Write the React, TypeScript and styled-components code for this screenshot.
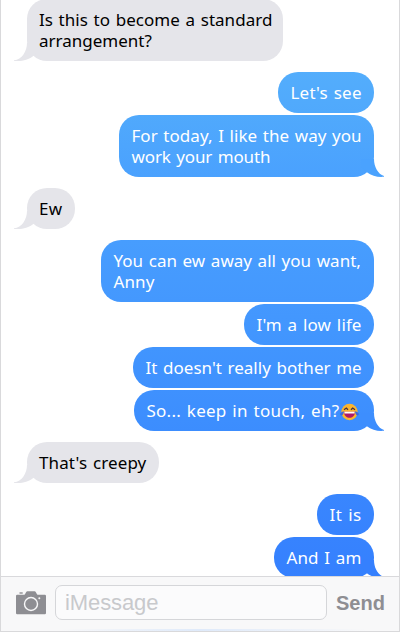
import React from "react";
import styled, { createGlobalStyle } from "styled-components";

const GlobalStyle = createGlobalStyle`
  * { box-sizing: border-box; }
  body { margin: 0; background: #fff; }
`;

type Side = "in" | "out";

const Phone = styled.main`
  display: flex;
  flex-direction: column;
  height: 632px;
  border: 1px solid #d9d9db;
  border-top: 0;
  overflow: hidden;
  font-family: "Noto Sans", "Noto Color Emoji", sans-serif;
`;

const Thread = styled.section`
  display: flex;
  flex-direction: column;
  gap: 11px;
  height: 576px;
  flex: none;
  padding: 0 25px 0 26px;
  overflow: hidden;
`;

const Group = styled.div<{ $side: Side }>`
  display: flex;
  flex-direction: column;
  align-items: ${(p) => (p.$side === "in" ? "flex-start" : "flex-end")};
  gap: 2px;
  &:first-child { margin-top: -1px; }
`;

const Bubble = styled.div<{ $side: Side; $width: number; $shade?: string }>`
  position: relative;
  flex: none;
  width: ${(p) => p.$width}px;
  padding: 10px 0 10px ${(p) => (p.$side === "in" ? 12 : 12.5)}px;
  border-radius: 20px;
  color: ${(p) => (p.$side === "in" ? "#000" : "#fff")};
  background: ${(p) => (p.$side === "in" ? "#e5e5ea" : p.$shade)};
  font-size: 17px;
  line-height: 21px;
  min-height: 41px;
`;

const Line = styled.div<{ $tracking: number }>`
  height: 21px;
  white-space: pre;
  word-spacing: 1.2px;
  letter-spacing: ${(p) => p.$tracking}px;
`;

const TailShape = styled.svg<{ $side: Side }>`
  position: absolute;
  bottom: 0;
  ${(p) => (p.$side === "in" ? "left: -13px;" : "right: -10px; transform: scaleX(-1);")}
`;

const Composer = styled.footer`
  display: flex;
  align-items: flex-start;
  flex: 1;
  padding: 8px 0 0 14px;
  border-top: 1px solid #d9d9dc;
  background:
    linear-gradient(90deg, transparent 15%, #dfeafa 50%, transparent 92%) bottom / 100% 2px no-repeat,
    #f8f8f9;
`;

const CameraIcon = styled.svg`
  flex: none;
  margin-top: 5px;
`;

const Field = styled.div`
  width: 272px;
  height: 35px;
  margin-left: 8px;
  padding-left: 9px;
  border: 1px solid #d5d6d9;
  border-radius: 7px;
  background: #fbfbfc;
  color: #c8c9cc;
  font: 22px/34px "Liberation Sans", Arial, sans-serif;
  letter-spacing: -0.1px;
`;

const Send = styled.div`
  margin-left: 9px;
  color: #8e8e93;
  font: bold 20px/36px "Liberation Sans", Arial, sans-serif;
`;

const Laugh = styled.svg`
  display: inline-block;
  vertical-align: -4px;
  margin-left: 0.5px;
`;

interface TextLine {
  text: string;
  tracking: number;
  laugh?: boolean;
}

interface Message {
  width: number;
  shade?: string;
  lines: TextLine[];
}

const thread: { side: Side; tail: string; messages: Message[] }[] = [
  {
    side: "in",
    tail: "#e5e5ea",
    messages: [
      {
        width: 256,
        lines: [
          { text: "Is this to become a standard", tracking: 0.03 },
          { text: "arrangement?", tracking: 0 },
        ],
      },
    ],
  },
  {
    side: "out",
    tail: "#4aa2fe",
    messages: [
      { width: 96, shade: "linear-gradient(#53adfc, #50a9fc)", lines: [{ text: "Let's see", tracking: 0.2 }] },
      {
        width: 255,
        shade: "linear-gradient(#50a9fc, #4aa1fe)",
        lines: [
          { text: "For today, I like the way you", tracking: 0.03 },
          { text: "work your mouth", tracking: -0.13 },
        ],
      },
    ],
  },
  { side: "in", tail: "#e5e5ea", messages: [{ width: 48, lines: [{ text: "Ew", tracking: 0.2 }] }] },
  {
    side: "out",
    tail: "#3d8efe",
    messages: [
      {
        width: 273,
        shade: "linear-gradient(#479dfe, #4498fe)",
        lines: [
          { text: "You can ew away all you want,", tracking: 0.01 },
          { text: "Anny", tracking: 0.1 },
        ],
      },
      { width: 130, shade: "linear-gradient(#4498fe, #4195fe)", lines: [{ text: "I'm a low life", tracking: 0.13 }] },
      { width: 241, shade: "linear-gradient(#4195fe, #3f91fe)", lines: [{ text: "It doesn't really bother me", tracking: 0.01 }] },
      {
        width: 240,
        shade: "linear-gradient(#3f91fe, #3c8dfe)",
        lines: [{ text: "So... keep in touch, eh?", tracking: 0.24, laugh: true }],
      },
    ],
  },
  {
    side: "in",
    tail: "#e5e5ea",
    messages: [{ width: 132, lines: [{ text: "That's creepy", tracking: 0.12 }] }],
  },
  {
    side: "out",
    tail: "#3580fe",
    messages: [
      { width: 57, shade: "linear-gradient(#3986fe, #3783fe)", lines: [{ text: "It is", tracking: 0.4 }] },
      { width: 100, shade: "linear-gradient(#3783fe, #3580fe)", lines: [{ text: "And I am", tracking: 0.08 }] },
    ],
  },
];

function Tail({ side, fill }: { side: Side; fill: string }) {
  const d =
    side === "in"
      ? "M13 0C13 8 8 16.800 0 17.200V18C8 18.200 14 17.300 19.300 13L25 8V0Z"
      : "M10 0C10 8 6 15 0 17V17.800C6 18.400 12 17.200 17.500 13L23 8V0Z";
  return (
    <TailShape $side={side} width="25" height="18" viewBox="0 0 25 18">
      <path d={d} fill={fill} />
    </TailShape>
  );
}

function LaughingFace() {
  return (
    <Laugh width="19" height="18" viewBox="0 0 19 17">
      <circle cx="9.5" cy="8.5" r="8.2" fill="#fbb52f" />
      <path d="M4 6.2 6.3 4.5 8 6.2M11 6.2 12.7 4.5 15 6.2" fill="none" stroke="#4a3140" strokeWidth="1.3" />
      <path d="M4 8.2h11c0 8-11 8-11 0Z" fill="#b01869" />
      <path d="M4.4 8.2h10.2v1.8H4.4Z" fill="#fff" />
      <path d="M4 7.8C1 8.2-.2 10 .3 11.3c.8 1.8 3.4.5 3.7-3.5ZM15 7.8c3 .4 4.2 2.2 3.7 3.5-.8 1.8-3.4.5-3.7-3.5Z" fill="#3d68dc" />
    </Laugh>
  );
}

export default function App() {
  return (
    <>
      <GlobalStyle />
      <Phone>
        <Thread>
          {thread.map(({ side, tail, messages }, g) => (
            <Group key={g} $side={side}>
              {messages.map((m, i) => (
                <Bubble key={i} $side={side} $width={m.width} $shade={m.shade}>
                  {i === messages.length - 1 && <Tail side={side} fill={tail} />}
                  {m.lines.map((l) => (
                    <Line key={l.text} $tracking={l.tracking}>
                      {l.text}
                      {l.laugh && <LaughingFace />}
                    </Line>
                  ))}
                </Bubble>
              ))}
            </Group>
          ))}
        </Thread>
        <Composer>
          <CameraIcon width="32" height="26" viewBox="0 0 32 26">
            <path
              d="M2.2 4.8H9c1.5 0 1.7-3.6 3.4-3.6h7.2c1.700 0 1.900 3.600 3.400 3.600h6.800q1.200 0 1.200 1.200v17q0 1.200-1.200 1.200H2.200Q1 24.200 1 23V6q0-1.200 1.200-1.200Z"
              fill="#8e8e93"
            />
            <path d="M4.500 3h3.200" stroke="#8e8e93" strokeWidth="1.400" />
            <circle cx="16" cy="14" r="6.500" fill="none" stroke="#f8f8f9" strokeWidth="1.400" />
            <circle cx="24.300" cy="8.300" r="1" fill="#f8f8f9" />
          </CameraIcon>
          <Field>iMessage</Field>
          <Send>Send</Send>
        </Composer>
      </Phone>
    </>
  );
}
